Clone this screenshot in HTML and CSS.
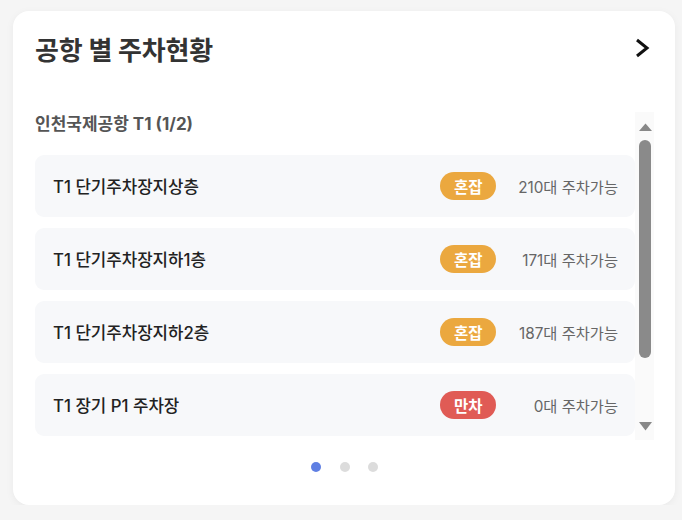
FILE: index.html
```html
<!DOCTYPE html>
<html lang="ko">
<head>
<meta charset="utf-8">
<title>공항 별 주차현황</title>
<link rel="stylesheet" href="styles.css">
</head>
<body>
<section class="card">
  <header class="card-head">
    <h2 class="title">공항 별 주차현황</h2>
    <button class="more" aria-label="더보기">
      <svg width="18" height="20" viewBox="0 0 18 20"><path d="M4 2 L14 10 L4 18" fill="none" stroke="#111" stroke-width="3"/></svg>
    </button>
  </header>
  <div class="list-wrap">
    <div class="list">
      <h3 class="subtitle">인천국제공항 T1 (1/2)</h3>
      <ul class="rows">
        <li class="row"><span class="name">T1 단기주차장지상층</span><span class="badge busy">혼잡</span><span class="avail">210대 주차가능</span></li>
        <li class="row"><span class="name">T1 단기주차장지하1층</span><span class="badge busy">혼잡</span><span class="avail">171대 주차가능</span></li>
        <li class="row"><span class="name">T1 단기주차장지하2층</span><span class="badge busy">혼잡</span><span class="avail">187대 주차가능</span></li>
        <li class="row"><span class="name">T1 장기 P1 주차장</span><span class="badge full">만차</span><span class="avail">0대 주차가능</span></li>
      </ul>
    </div>
    <div class="scrollbar" aria-hidden="true">
      <div class="sb-btn up"><svg width="13" height="8" viewBox="0 0 13 8"><path d="M6.5 0.5 L13 8 L0 8 Z" fill="#888"/></svg></div>
      <div class="sb-track"><div class="sb-thumb"></div></div>
      <div class="sb-btn down"><svg width="13" height="9" viewBox="0 0 13 9"><path d="M0 0 L13 0 L6.5 8.5 Z" fill="#888"/></svg></div>
    </div>
  </div>
  <div class="dots">
    <span class="dot active"></span>
    <span class="dot"></span>
    <span class="dot"></span>
  </div>
</section>
</body>
</html>
```

FILE: styles.css
```css
* { box-sizing: border-box; }
html, body { margin: 0; padding: 0; }
body {
  background: #f5f5f5;
  font-family: Inter, "Noto Sans CJK KR", sans-serif;
  padding: 11px 7px 0 13px;
}
.card {
  width: 662px;
  height: 494px;
  background: #fff;
  border-radius: 16px;
  box-shadow: 0 2px 8px rgba(0,0,0,0.05);
  padding: 15px 21px 0 22px;
  display: flex;
  flex-direction: column;
}
.card-head {
  display: flex;
  align-items: center;
  justify-content: space-between;
  height: 44px;
}
.title {
  margin: 0;
  font-size: 26px;
  font-weight: 700;
  color: #333;
  letter-spacing: -0.2px;
}
.more {
  border: 0;
  background: none;
  padding: 0;
  margin-right: 3px;
  display: flex;
}
.list-wrap {
  margin-top: 42px;
  height: 328px;
  display: flex;
}
.list {
  flex: 1;
  overflow: hidden;
}
.scrollbar {
  width: 19px;
  background: #fafafa;
  display: flex;
  flex-direction: column;
}
.sb-btn {
  height: 28px;
  display: flex;
  justify-content: center;
  padding-left: 1px;
}
.sb-btn.up { align-items: flex-start; padding-top: 11px; }
.sb-btn.down { height: 27px; align-items: flex-start; padding-top: 9px; }
.sb-track { flex: 1; }
.sb-thumb {
  width: 12px;
  height: 218px;
  margin-left: 4px;
  border-radius: 6px;
  background: #8a8a8a;
}
.subtitle {
  margin: 0 0 19px;
  height: 24px;
  line-height: 24px;
  font-size: 17px;
  font-weight: 700;
  color: #555;
}
.rows {
  list-style: none;
  margin: 0;
  padding: 0;
  display: flex;
  flex-direction: column;
  gap: 11px;
}
.row {
  height: 62px;
  background: #f7f8fa;
  border-radius: 9px;
  display: flex;
  align-items: center;
  padding: 0 17px 0 18px;
}
.name {
  flex: 1;
  font-size: 16.8px;
  font-weight: 500;
  color: #222;
}
.badge {
  height: 28px;
  padding: 0 13.5px;
  border-radius: 14px;
  color: #fff;
  font-size: 15.5px;
  font-weight: 700;
  display: flex;
  align-items: center;
}
.busy { background: #eba83f; }
.full { background: #e05b55; }
.avail {
  width: 122px;
  text-align: right;
  font-size: 15.3px;
  color: #666;
}
.dots {
  display: flex;
  justify-content: center;
  gap: 18.5px;
  margin-top: 22px;
}
.dot {
  width: 10px;
  height: 10px;
  border-radius: 50%;
  background: #dcdcdc;
}
.dot.active { background: #5f7fe3; }
```
